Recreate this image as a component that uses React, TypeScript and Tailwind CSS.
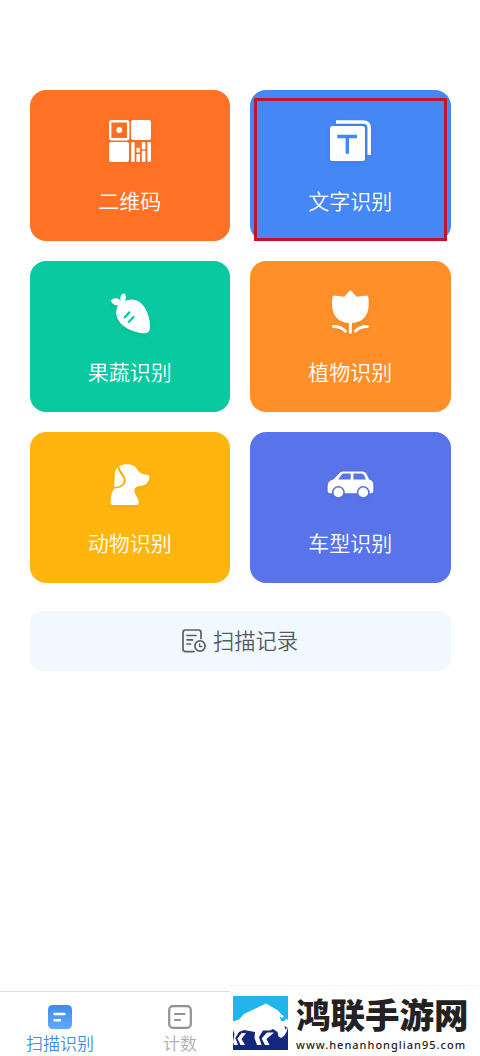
import type { ReactNode } from 'react';

interface ScanTileProps {
  label: string;
  color: string;
  icon: ReactNode;
  highlighted?: boolean;
}

const iconClass = 'h-12 w-12 drop-shadow-[0_2px_2px_rgba(0,0,0,0.06)]';

function QrIcon() {
  return (
    <svg viewBox="0 0 48 48" className={iconClass} fill="#fff">
      <rect x="4.2" y="4.2" width="18" height="18" rx="1.5" fill="none" stroke="#fff" strokeWidth="2.4" />
      <circle cx="13.2" cy="13" r="2.9" />
      <rect x="25" y="3" width="20" height="20" rx="2.2" />
      <rect x="3" y="25" width="20" height="20" rx="2.2" />
      <rect x="25.2" y="25" width="3.4" height="20" rx="1.2" />
      <rect x="30.4" y="30.8" width="3.6" height="4.8" rx="1" />
      <rect x="30.4" y="37" width="3.6" height="8" rx="1" />
      <rect x="35.8" y="25" width="3.6" height="7.4" rx="1" />
      <rect x="35.8" y="33.8" width="3.6" height="11.2" rx="1" />
      <rect x="41.4" y="25" width="3.6" height="20" rx="1.2" />
    </svg>
  );
}

function TextIcon() {
  return (
    <svg viewBox="0 0 48 48" className={iconClass}>
      <path d="M10 4.9H37Q43.2 4.9 43.2 11.1V38" fill="none" stroke="#fff" strokeWidth="3.5" />
      <rect x="4" y="9" width="35" height="35" rx="2.5" fill="#fff" />
      <path d="M11.3 19.5H31M21.3 19.5V36.8" fill="none" stroke="#4487f5" strokeWidth="3.4" />
    </svg>
  );
}

function CarrotIcon() {
  return (
    <svg viewBox="0 0 48 48" className={iconClass} fill="#fff">
      <path d="M14 17C10 18.2 6 16.8 4.6 12.6C8.2 9 12.6 9.6 14.9 13.4C13.3 9.8 14.6 6.6 18.5 5.2C21 8.8 20.2 12.2 16.8 14.8Z" />
      <path d="M21 12.2C28 9.8 35 13.5 39 20C42.3 25.5 44 32 44.1 38.5C44.2 43.4 41.5 45.6 37 45.3C30.5 44.8 23 42.4 17.3 37.8C11.4 32.8 9 26 10.8 20.4C12.2 15.8 16 13.8 21 12.2Z" />
      <path d="M18.8 29.2L23.3 24.4M22.9 33.8L27.5 29" stroke="#08c9a0" strokeWidth="2.3" strokeLinecap="round" />
    </svg>
  );
}

function FlowerIcon() {
  return (
    <svg viewBox="0 0 48 48" className={iconClass} fill="#fff">
      <path d="M24.4 2.6Q25.2 2.6 26 3.5L30.5 8.7L40.3 7.6Q42.2 7.5 42.4 9.4C43.2 16 43 23 39.5 28.2C36.3 32.8 31 35 24.4 35C17.8 35 12.5 32.8 9.3 28.2C5.8 23 5.6 16 6.4 9.4Q6.6 7.5 8.5 7.6L18.3 8.7L22.8 3.5Q23.6 2.6 24.4 2.6Z" />
      <path d="M24.4 34V44.3M7.3 38.5C12.5 38.4 16.5 40 19.4 43.2M41.5 38.5C36.3 38.4 32.3 40 29.4 43.2" fill="none" stroke="#fff" strokeWidth="3" strokeLinecap="round" />
    </svg>
  );
}

function DogIcon() {
  return (
    <svg viewBox="0 0 48 48" className={iconClass} fill="#fff">
      <path d="M13.3 7.2C18.5 4.4 27 4.6 30.4 9.2C32.5 12.2 34 14.6 37.5 15.2L42 15.9Q43.8 16.4 43.4 18.7C42.8 23.6 39.6 26.4 34.4 26.9C30 27.3 28.2 29.4 28.4 32.3C28.7 35.8 32.6 38.8 32.7 43.5Q32.8 46 30.5 46H6.5Q4.5 46 4.6 43.7C4.6 38 5.5 33 8.2 29.4C14.5 29.6 19.6 26.6 19.8 21.5C20 16 14.3 13.5 13.3 7.2Z" />
      <path d="M11.6 8.6C12.5 15 18 17 17.8 21.5C17.6 25.7 13.3 28.2 8.2 27.7C7.8 24.5 9 21 8.7 17.5C8.5 13.8 9.4 10.6 11.6 8.6Z" />
    </svg>
  );
}

function CarIcon() {
  return (
    <svg viewBox="0 0 48 48" className={iconClass} fill="#fff">
      <path d="M17.5 12.5H36Q39.5 12.5 40.9 15.8L43.2 20.4Q47.3 21.6 47.3 25.5V31.8Q47.3 34.3 44.8 34.3H43.6A6.4 6.4 0 1 0 30.9 34.3H18.7A6.4 6.4 0 1 0 6 34.3H4.2Q1.7 34.3 1.7 31.8V27Q1.7 21.8 7.4 20.6L12.6 14.9Q14.6 12.5 17.5 12.5Z" />
      <path d="M17.8 14.5H24.7V20.4H12.2L15.8 15.6Q16.6 14.5 17.8 14.5ZM27.4 14.5H35.4Q37.2 14.5 38 16L40 20.4H27.4Z" fill="#5974ea" />
      <circle cx="12.4" cy="33.4" r="4.9" />
      <circle cx="37.2" cy="33.4" r="4.9" />
    </svg>
  );
}

function HistoryIcon() {
  return (
    <svg viewBox="0 0 24 24" className="h-6 w-6" fill="none" stroke="#5b6066" strokeWidth="1.7" strokeLinecap="round" strokeLinejoin="round">
      <path d="M12 22.6H3.5Q1 22.6 1 20V3.4Q1 1 3.5 1H16.5Q19 1 19 3.4V9.5" />
      <path d="M5 6.5H14M5 10.8H10.5M5 15H8.5" />
      <circle cx="18" cy="17" r="5.1" />
      <path d="M17.6 14.8V17.5H19.8" strokeWidth="1.3" />
    </svg>
  );
}

function BisonLogo() {
  return (
    <svg viewBox="0 0 55 54" className="h-[54px] w-[55px] shrink-0">
      <path d="M0 0H55V54H0Z" fill="#22b5eb" />
      <path d="M0 26H55V54H0Z" fill="#14277f" />
      {/* body, head and near legs */}
      <path d="M0 25.5L6 23.5L11 18L33 7.5L45 14.5L48 18L55 24V31L53.5 36L51 40L48 42L45.5 40.5L44.5 36L40 33L37 34.5H30L26 41L28.5 49H24L21.5 42L22 36L11 34L6 36L2.5 41.5L5 49H1L0 46L1.5 38L0 34Z" fill="#fff" />
      {/* far legs */}
      <path d="M13 37H8.5L4 42.5L7.5 49H12L8.5 43ZM41 36.5H34L28.5 42.5L32 49H36.5L33.5 43Z" fill="#fff" />
      <path d="M8.5 36L3.2 42.2L6.5 49M33 35.8L27.5 42.2L30.5 49" fill="none" stroke="#14277f" strokeWidth="1.6" />
      {/* horn and eye */}
      <path d="M49 11L47 14.5L50.5 17L51 20L49 22L46.5 20L48 25L51.5 25L54 21L52.5 16L49.5 14Z" fill="#22b5eb" />
      <path d="M51.5 30L54 31.5L52.5 34Z" fill="#14277f" />
    </svg>
  );
}

function ScanTile({ label, color, icon, highlighted = false }: ScanTileProps) {
  return (
    <div className={`relative flex h-[151px] flex-col items-center rounded-2xl pt-[27px] ${color}`}>
      {icon}
      <span className="mt-5 text-[21px] leading-[30px] font-[350] text-white">{label}</span>
      {highlighted && <div className="absolute top-2 right-1 bottom-0 left-1 border-[3px] border-[#c0132d]" />}
    </div>
  );
}

const tiles: ScanTileProps[] = [
  { label: '二维码', color: 'bg-[#ff7226]', icon: <QrIcon /> },
  { label: '文字识别', color: 'bg-[#4487f5]', icon: <TextIcon />, highlighted: true },
  { label: '果蔬识别', color: 'bg-[#08c9a0]', icon: <CarrotIcon /> },
  { label: '植物识别', color: 'bg-[#ff9029]', icon: <FlowerIcon /> },
  { label: '动物识别', color: 'bg-[#ffb50e]', icon: <DogIcon /> },
  { label: '车型识别', color: 'bg-[#5974ea]', icon: <CarIcon /> },
];

export default function App() {
  return (
    <div className="flex h-[1056px] w-[480px] flex-col overflow-hidden bg-white font-['Noto_Sans_CJK_SC',sans-serif]">
      <main className="px-[29.5px] pt-[90px]">
        <div className="grid grid-cols-2 gap-5">
          {tiles.map((tile) => (
            <ScanTile key={tile.label} {...tile} />
          ))}
        </div>

        <button className="mt-7 flex h-[60px] w-full items-center justify-center gap-[7px] rounded-xl bg-[#f1f8ff] text-[21.3px] text-[#555a60]">
          <HistoryIcon />
          <span className="-mt-0.5 leading-[30px] font-[350]">扫描记录</span>
        </button>
      </main>

      {/* Bottom tabs */}
      <nav className="relative mt-auto flex h-[65px] border-t border-[#dcdfe2]">
        <div className="flex w-[120px] flex-col items-center pt-[13px] text-[#428be5]">
          <svg viewBox="0 0 24 24" className="h-6 w-6">
            <defs>
              <linearGradient id="tab" x1="0" y1="0" x2="0" y2="1">
                <stop offset="0" stopColor="#4089ed" />
                <stop offset="1" stopColor="#62aaff" />
              </linearGradient>
            </defs>
            <rect width="24" height="24" rx="4.5" fill="url(#tab)" />
            <path d="M6.5 9H16.5M6.5 15.2H12" stroke="#fff" strokeWidth="2.4" strokeLinecap="round" />
          </svg>
          <span className="mt-0.5 text-[17px] leading-6 font-[350]">扫描识别</span>
        </div>
        <div className="flex w-[120px] flex-col items-center pt-[13px] text-[#b0b0b0]">
          <svg viewBox="0 0 24 24" className="h-6 w-6" fill="none" stroke="#929292" strokeWidth="2.2" strokeLinecap="round">
            <rect x="1.2" y="1.2" width="21.6" height="21.6" rx="3.8" />
            <path d="M7 9H16.5M7 15H12" />
          </svg>
          <span className="mt-0.5 text-[17px] leading-6 font-[350]">计数</span>
        </div>

        <div className="absolute -top-[7px] right-0 flex h-[72px] w-[250px] gap-2 border-t border-[#f7f7f7] bg-white pt-[10px] pl-[3px]">
          <BisonLogo />
          <div className="flex flex-col whitespace-nowrap text-[#222]">
            <span className="text-[34.5px] leading-[34px] font-black">鸿联手游网</span>
            <span className="mt-[7px] font-['Noto_Sans',sans-serif] text-[11px] leading-[15px] font-medium tracking-[1px]">www.henanhonglian95.com</span>
          </div>
        </div>
      </nav>
    </div>
  );
}
